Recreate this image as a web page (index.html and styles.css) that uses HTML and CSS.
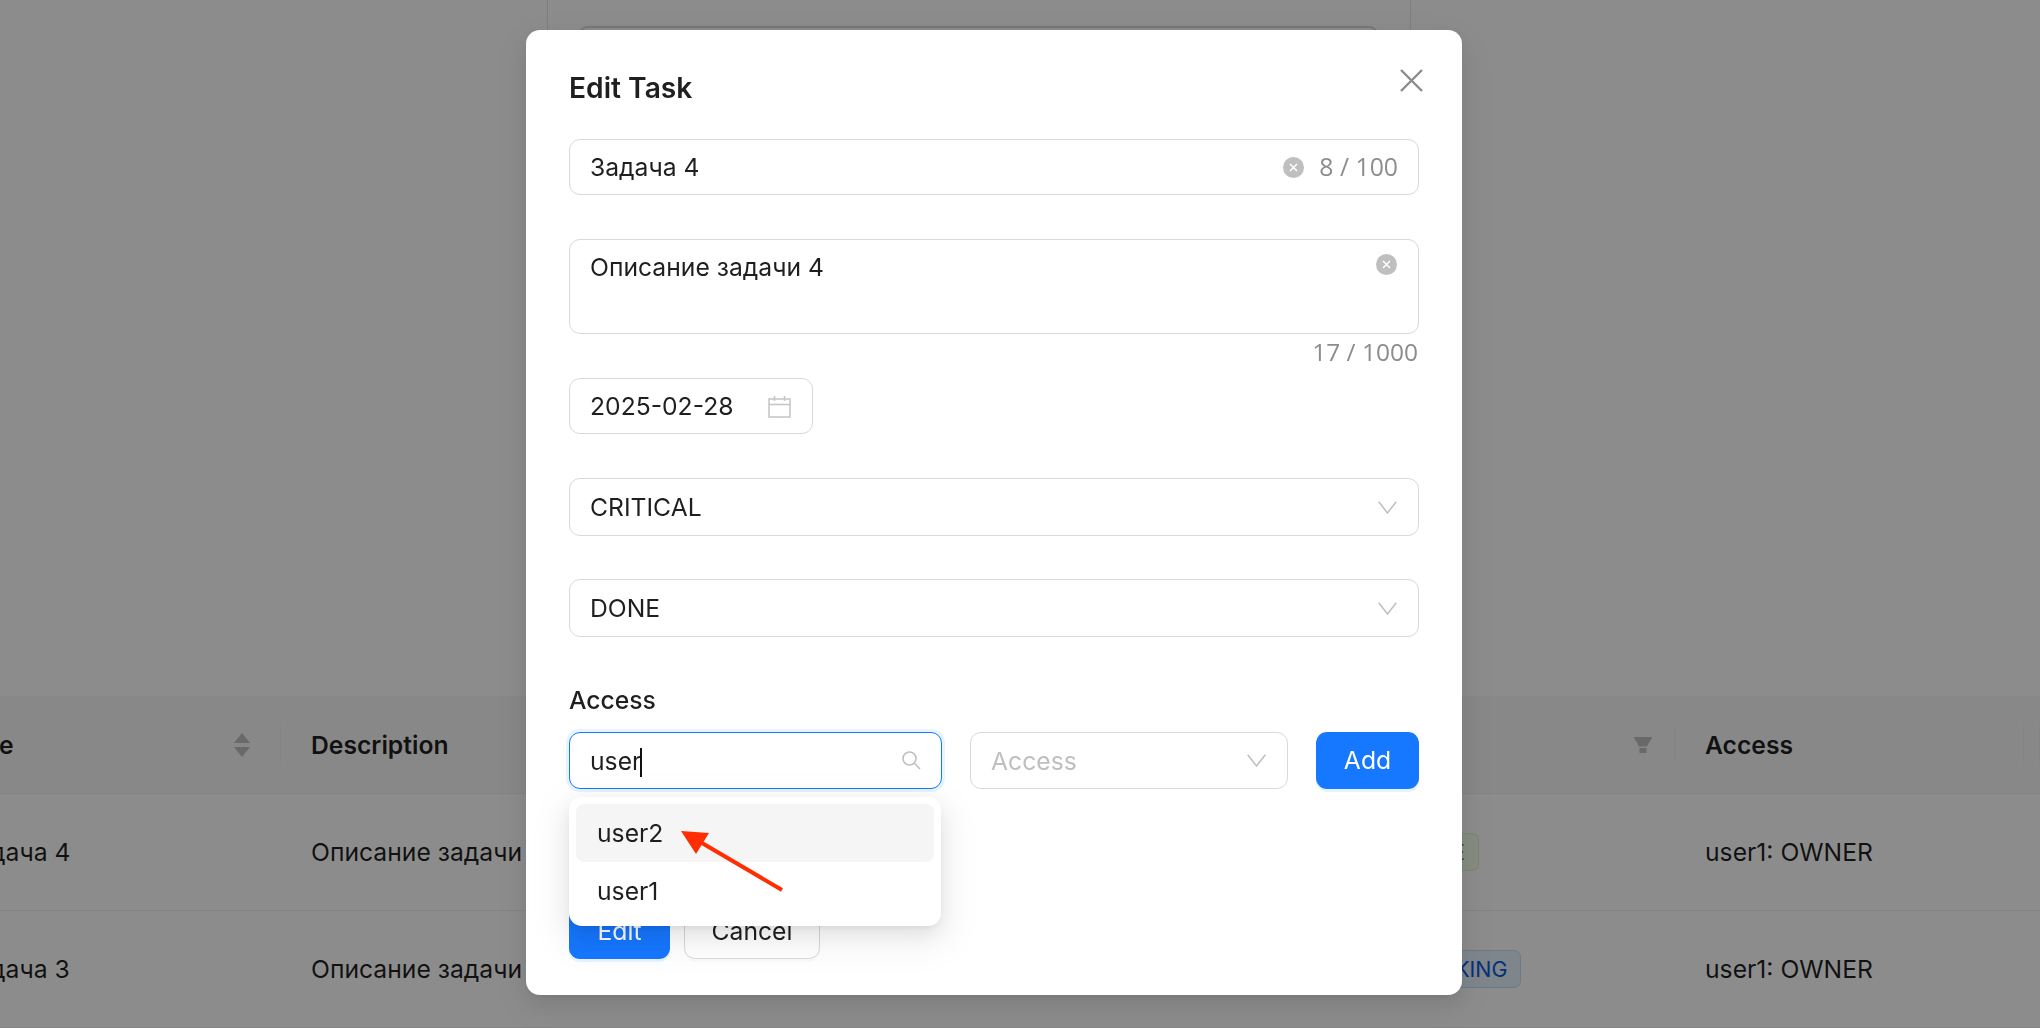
FILE: index.html
```html
<!DOCTYPE html>
<html lang="en">
<head>
    <meta charset="UTF-8">
    <meta name="viewport" content="width=device-width, initial-scale=1.0">
    <title>Tasks</title>
    <link rel="stylesheet" href="styles.css">
</head>
<body>
    <!-- page behind the dialog -->
    <div class="page">
        <div class="top-area">
            <div class="card">
                <div class="card-box"></div>
            </div>
        </div>
        <div class="table">
            <div class="row row-head">
                <div class="cell col-title">
                    <span>Title</span>
                    <svg class="sort-icon" width="18" height="26" viewBox="0 0 18 26"><path d="M9 1 17 11H1z" stroke-linejoin="round"/><path d="M9 25 1 15h16z" stroke-linejoin="round"/></svg>
                </div>
                <div class="cell col-desc"><span>Description</span></div>
                <div class="cell col-status">
                    <span class="status-label">Status</span>
                    <svg class="filter-icon" width="20" height="20" viewBox="64 64 896 896"><path d="M349 838c0 17.7 14.2 32 31.8 32h262.4c17.6 0 31.8-14.3 31.8-32V642H349v196zm531.1-684H143.9c-24.5 0-39.8 26.7-27.5 48l221.3 376h348.8l221.3-376c12.1-21.3-3.2-48-27.7-48z"/></svg>
                </div>
                <div class="cell col-access"><span>Access</span></div>
                <div class="cell col-rest"></div>
            </div>
            <div class="row">
                <div class="cell col-title">Задача 4</div>
                <div class="cell col-desc">Описание задачи 4</div>
                <div class="cell col-status"><span class="tag tag-done">DONE</span></div>
                <div class="cell col-access">user1: OWNER</div>
                <div class="cell col-rest"></div>
            </div>
            <div class="row">
                <div class="cell col-title">Задача 3</div>
                <div class="cell col-desc">Описание задачи 3</div>
                <div class="cell col-status"><span class="tag tag-working">WORKING</span></div>
                <div class="cell col-access">user1: OWNER</div>
                <div class="cell col-rest"></div>
            </div>
        </div>
    </div>

    <div class="overlay">
        <div class="modal">
            <div class="modal-head">
                <h2>Edit Task</h2>
                <svg class="close-icon" width="23" height="23" viewBox="0 0 23 23"><path d="M1 1 22 22M22 1 1 22"/></svg>
            </div>

            <div class="field field-title">
                <span class="value">Задача 4</span>
                <svg class="clear-icon" width="21" height="21" viewBox="0 0 21 21"><circle cx="10.5" cy="10.5" r="10.5"/><path d="M7 7l7 7M14 7l-7 7"/></svg>
                <span class="count">8 / 100</span>
            </div>

            <div class="field field-text">
                <span class="value">Описание задачи 4</span>
                <svg class="clear-icon" width="21" height="21" viewBox="0 0 21 21"><circle cx="10.5" cy="10.5" r="10.5"/><path d="M7 7l7 7M14 7l-7 7"/></svg>
            </div>
            <div class="text-count">17 / 1000</div>

            <div class="field field-date">
                <span class="value">2025-02-28</span>
                <svg class="date-icon" width="23" height="23" viewBox="0 0 23 23"><path d="M1 4h21v18H1zM1 9.5h21M6.5 1v5M16.500 1v5"/></svg>
            </div>

            <div class="field field-select">
                <span class="value">CRITICAL</span>
                <svg class="chevron" width="19" height="13" viewBox="0 0 19 13"><path d="M.7.7 9.500 12 18.300.7"/></svg>
            </div>

            <div class="field field-select field-last">
                <span class="value">DONE</span>
                <svg class="chevron" width="19" height="13" viewBox="0 0 19 13"><path d="M.7.7 9.500 12 18.300.7"/></svg>
            </div>

            <div class="access-label">Access</div>
            <div class="access-row">
                <div class="user-select">
                    <div class="field field-user">
                        <span class="value">user<i class="caret"></i></span>
                        <svg class="search-icon" width="19" height="19" viewBox="0 0 19 19"><circle cx="7.500" cy="7.500" r="6.500"/><path d="M12.300 12.300 18 18"/></svg>
                    </div>
                    <div class="dropdown">
                        <div class="option option-active">user2</div>
                        <div class="option">user1</div>
                    </div>
                    <svg class="arrow" width="120" height="70" viewBox="0 0 120 70"><path class="arrow-line" d="M113 60 33 13"/><path class="arrow-head" d="M12 1 40 3 27 24z"/></svg>
                </div>
                <div class="field field-role">
                    <span class="placeholder">Access</span>
                    <svg class="chevron" width="19" height="13" viewBox="0 0 19 13"><path d="M.7.7 9.500 12 18.300.7"/></svg>
                </div>
                <button type="button" class="btn btn-primary btn-add">Add</button>
            </div>

            <div class="actions">
                <button type="button" class="btn btn-primary btn-edit">Edit</button>
                <button type="button" class="btn btn-cancel">Cancel</button>
            </div>
        </div>
    </div>
</body>
</html>
```

FILE: styles.css
```css
* {
    box-sizing: border-box;
}
html, body {
    margin: 0;
    height: 100%;
    overflow: hidden;
}
body {
    font-family: 'Inter', 'Liberation Sans', sans-serif;
    font-size: 24.700px;
    color: rgba(0,0,0,0.88);
    background: #fff;
}

/* page behind the dialog */
.top-area {
    height: 696px;
    overflow: hidden;
}
.card {
    width: 864px;
    height: 680px;
    margin: -20px 0 0 547px;
    padding: 45px 31px 0 30px;
    border: 1px solid #e6e6e6;
    border-radius: 12px;
}
.card-box {
    height: 400px;
    border: 2px solid #d8d8d8;
    border-radius: 10px;
}
.table {
    width: 2109px;
    margin-left: -69px;
}
.row {
    display: flex;
    height: 117px;
    border-bottom: 1px solid #f0f0f0;
}
.row-head {
    height: 98px;
    background: #f8f8f8;
    font-weight: 600;
}
.cell {
    display: flex;
    align-items: center;
    justify-content: space-between;
    padding: 0 30px;
    white-space: nowrap;
    overflow: hidden;
}
.row-head .cell {
    position: relative;
}
.row-head .cell::after {
    content: "";
    position: absolute;
    right: 0;
    top: 29px;
    height: 38px;
    width: 1px;
    background: #f0f0f0;
}
.col-title {
    width: 350px;
}
.col-desc {
    width: 1079px;
}
.col-status {
    width: 315px;
    padding-right: 22px;
}
.col-access {
    width: 349px;
}
.col-rest {
    width: 16px;
    padding: 0;
}
.status-label {
    margin-left: -16px;
}
.sort-icon path,
.filter-icon path {
    fill: #bfbfbf;
}
.tag {
    display: block;
    padding: 3px 13px;
    border-radius: 7px;
    font-size: 21.400px;
    line-height: 30px;
    border: 1px solid;
}
.tag-done {
    background: #f6ffed;
    border-color: #d9f7be;
    color: #389e0d;
}
.tag-working {
    background: #e6f4ff;
    border-color: #bae0ff;
    color: #0958d9;
}

/* dialog */
.overlay {
    position: fixed;
    inset: 0;
    display: flex;
    align-items: flex-start;
    padding: 30px 0 0 526px;
    background: rgba(0,0,0,0.45);
}
.modal {
    width: 936px;
    height: 965px;
    padding: 0 43px;
    background: #fff;
    border-radius: 14px;
    box-shadow: 0 8px 21px rgba(0,0,0,0.08), 0 4px 8px -5px rgba(0,0,0,0.12), 0 12px 36px 10px rgba(0,0,0,0.05);
}
.modal-head {
    display: flex;
    align-items: flex-start;
    justify-content: space-between;
    height: 109px;
    padding-top: 39px;
}
.modal-head h2 {
    margin: 0;
    font-size: 28.200px;
    font-weight: 600;
    line-height: 38px;
}
.close-icon {
    margin-right: -4px;
}
.close-icon path {
    fill: none;
    stroke: #8c8c8c;
    stroke-width: 2.400;
}
.field {
    display: flex;
    align-items: center;
    height: 56px;
    padding: 0 20px;
    border: 1.5px solid #d9d9d9;
    border-radius: 11px;
    background: #fff;
}
.value {
    flex: 1;
    white-space: nowrap;
}
.field-title {
    margin-bottom: 44px;
}
.clear-icon {
    flex: none;
}
.clear-icon circle {
    fill: #bfbfbf;
}
.clear-icon path {
    stroke: #fff;
    stroke-width: 1.5;
}
.count {
    margin-left: 15px;
    margin-top: -2px;
    font-family: 'Open Sans', sans-serif;
    font-size: 24.800px;
    color: #8c8c8c;
}
.field-text {
    align-items: flex-start;
    height: 95px;
    padding-top: 12px;
}
.field-text .clear-icon {
    margin: 2px 1px 0 0;
}
.text-count {
    height: 44px;
    padding: 1px 1px 0 0;
    text-align: right;
    font-family: 'Open Sans', sans-serif;
    font-size: 24.500px;
    line-height: 34px;
    color: #8c8c8c;
}
.field-date {
    width: 244px;
    margin-bottom: 44px;
}
.date-icon {
    margin-right: 1px;
}
.date-icon path {
    fill: none;
    stroke: #c4c4c4;
    stroke-width: 1.5;
}
.field-select {
    height: 58px;
    margin-bottom: 43px;
}
.field-last {
    margin-bottom: 48px;
}
.chevron {
    margin-right: 1px;
}
.chevron path {
    fill: none;
    stroke: #bfbfbf;
    stroke-width: 1.5;
}
.access-label {
    height: 30px;
    margin-bottom: 17px;
    line-height: 30px;
    font-weight: 500;
}
.access-row {
    display: flex;
    gap: 28px;
    height: 57px;
}
.user-select {
    position: relative;
    width: 373px;
}
.field-user {
    height: 57px;
    border-color: #1677ff;
    box-shadow: 0 0 0 3px rgba(5,145,255,0.1);
}
.field-user .value {
    padding-top: 1px;
}
.caret {
    display: inline-block;
    width: 2px;
    height: 29px;
    margin-left: -1px;
    vertical-align: -7px;
    background: #111;
}
.search-icon circle,
.search-icon path {
    fill: none;
    stroke: #bfbfbf;
    stroke-width: 1.6;
}
.dropdown {
    position: absolute;
    left: 0;
    top: 65px;
    z-index: 2;
    width: 372px;
    height: 129px;
    padding: 7px;
    background: #fff;
    border-radius: 13px;
    box-shadow: 0 8px 21px rgba(0,0,0,0.08), 0 4px 8px -5px rgba(0,0,0,0.12), 0 12px 36px 10px rgba(0,0,0,0.05);
}
.option {
    height: 57.500px;
    padding: 0 21px;
    line-height: 58px;
    border-radius: 8px;
}
.option-active {
    background: #f5f5f5;
}
.arrow {
    position: absolute;
    left: 100px;
    top: 98px;
    z-index: 3;
}
.arrow-line {
    fill: none;
    stroke: #ff2d00;
    stroke-width: 4;
}
.arrow-head {
    fill: #ff2d00;
}
.field-role {
    width: 318px;
    justify-content: space-between;
    height: 57px;
}
.placeholder {
    color: #bfbfbf;
}
.btn {
    height: 55px;
    padding: 0 0 2px;
    font-family: inherit;
    font-size: 24.700px;
    border-radius: 11px;
    cursor: pointer;
}
.btn-primary {
    background: #1677ff;
    color: #fff;
    border: none;
    box-shadow: 0 3px 0 rgba(5,145,255,0.1);
}
.btn-add {
    width: 103px;
    height: 57px;
}
.actions {
    display: flex;
    gap: 14px;
    margin-top: 115px;
}
.btn-edit {
    width: 101px;
}
.btn-cancel {
    width: 136px;
    background: #fff;
    color: rgba(0,0,0,0.88);
    border: 1.5px solid #d9d9d9;
    box-shadow: 0 3px 0 rgba(0,0,0,0.02);
}
```
